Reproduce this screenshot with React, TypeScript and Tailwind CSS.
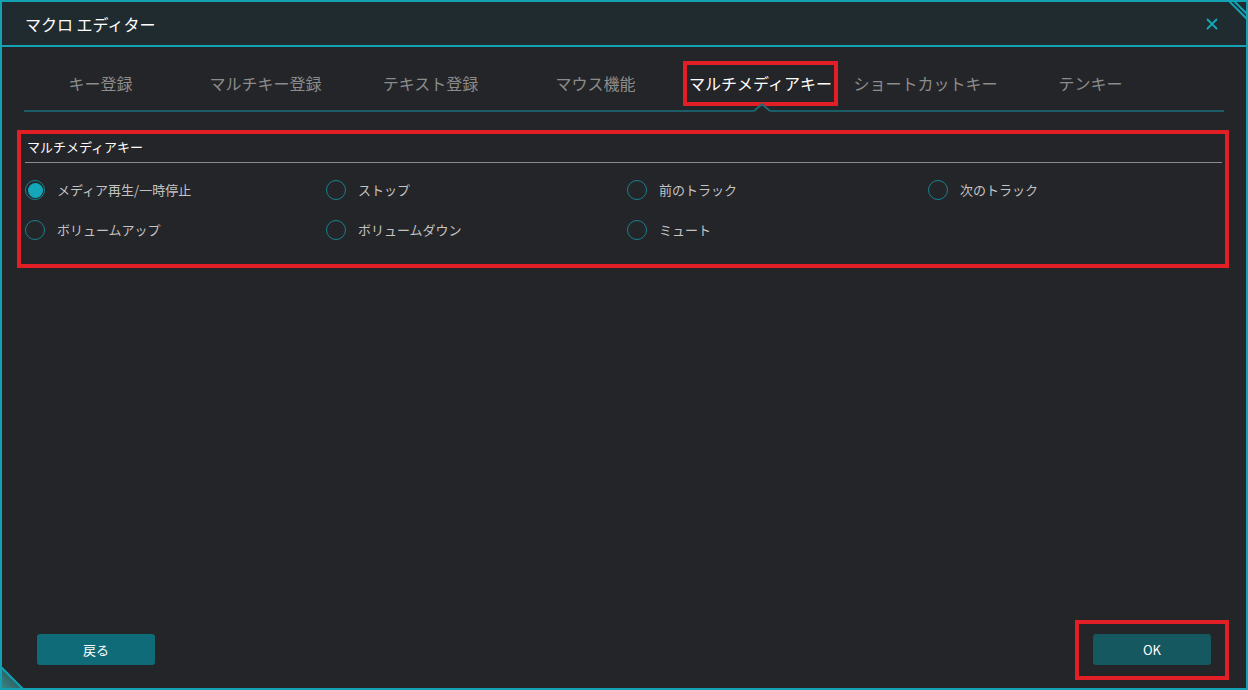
import { X } from "lucide-react";

const tabs = [
  "キー登録",
  "マルチキー登録",
  "テキスト登録",
  "マウス機能",
  "マルチメディアキー",
  "ショートカットキー",
  "テンキー",
];

const options = [
  { label: "メディア再生/一時停止", checked: true },
  { label: "ストップ" },
  { label: "前のトラック" },
  { label: "次のトラック" },
  { label: "ボリュームアップ" },
  { label: "ボリュームダウン" },
  { label: "ミュート" },
];

function Radio({ label, checked }: { label: string; checked?: boolean }) {
  return (
    <div className="flex items-center gap-3 h-5">
      <div className="flex items-center justify-center w-5 h-5 rounded-full border-[1.5px] border-[#17828f]">
        {checked && <div className="w-[15px] h-[15px] rounded-full bg-[#14a6b9]" />}
      </div>
      <span className="text-[13px] text-[#c4c4c4]">{label}</span>
    </div>
  );
}

export default function App() {
  return (
    <div
      className="relative flex flex-col w-[1248px] h-[690px] bg-[#242528] border-2 border-[#12a2b3] overflow-hidden"
      style={{ fontFamily: '"Noto Sans CJK JP", "Noto Sans", sans-serif' }}
    >
      {/* Title bar */}
      <div className="flex items-center justify-between h-[45px] pl-[23px] pr-[25px] bg-[#1f2b2f] border-b-2 border-[#12a2b3]">
        <span className="text-[16px] text-white">マクロ エディター</span>
        <X className="w-[18px] h-[18px] text-[#14a7b9]" strokeWidth={2.5} />
      </div>

      {/* Tabs */}
      <div className="flex h-[63px] pt-[8px] pl-[16px]">
        {tabs.map((t) => {
          const active = t === "マルチメディアキー";
          return (
            <div
              key={t}
              className={
                "relative flex items-center justify-center w-[165px] text-[16px] " +
                (active ? "text-white" : "text-[#8c8c8c]")
              }
            >
              {t}
              {active && (
                <div className="absolute left-[5px] right-[5px] top-[6px] bottom-[4px] border-4 border-[#e21f26]" />
              )}
            </div>
          );
        })}
      </div>
      <div className="relative mx-[22px] h-[2px] bg-[#1b5d67]">
        <svg className="absolute left-[730px] -top-[7px]" width="16" height="9" viewBox="0 0 16 9">
          <rect x="0" y="7" width="16" height="2" fill="#242528" />
          <polyline points="0,8 8,1 16,8" fill="none" stroke="#1e6a74" strokeWidth="2" />
        </svg>
      </div>

      {/* Group */}
      <div className="relative mt-[18px] ml-[15px] mr-[17px] pt-[8px] pb-[28px] pl-[8px] pr-[7px]">
        <div className="pl-[2px] h-[18px] leading-[18px] text-[13px] text-white">マルチメディアキー</div>
        <div className="mt-[6px] h-px bg-[#8c8c8c]" />
        <div className="grid grid-cols-[301px_301px_301px_301px] gap-y-5 mt-[17px]">
          {options.map((o) => (
            <Radio key={o.label} label={o.label} checked={o.checked} />
          ))}
        </div>
        <div className="absolute inset-0 border-4 border-[#e21f26]" />
      </div>

      {/* Footer */}
      <div className="flex items-end justify-between flex-1 px-[35px] pb-[23px]">
        <button className="w-[118px] h-[31px] rounded-[3px] bg-[#0f6b77] text-[13px] text-white">戻る</button>
        <div className="relative">
          <button className="w-[118px] h-[31px] rounded-[3px] bg-[#165860] text-[13px] text-white">OK</button>
          <div className="absolute -left-[18px] -right-[18px] -top-[14px] -bottom-[15px] border-4 border-[#e21f26]" />
        </div>
      </div>

      {/* Corner decorations */}
      <svg className="absolute -top-[2px] -right-[2px]" width="22" height="22" viewBox="0 0 22 22">
        <polygon points="2,0 22,0 22,20" fill="#1f2b2f" />
        <line x1="2" y1="0" x2="22" y2="20" stroke="#12a2b3" strokeWidth="2" />
        <line x1="7" y1="0" x2="22" y2="15" stroke="#12a2b3" strokeWidth="2" />
      </svg>
      <svg className="absolute -bottom-[2px] -left-[2px]" width="24" height="24" viewBox="0 0 24 24">
        <defs>
          <linearGradient id="cg" x1="0" y1="1" x2="1" y2="0">
            <stop offset="0" stopColor="#3e8c8c" />
            <stop offset="1" stopColor="#1d3a3e" />
          </linearGradient>
        </defs>
        <polygon points="0,0 24,24 0,24" fill="url(#cg)" />
        <line x1="0" y1="0" x2="24" y2="24" stroke="#12a2b3" strokeWidth="2" />
      </svg>
    </div>
  );
}
